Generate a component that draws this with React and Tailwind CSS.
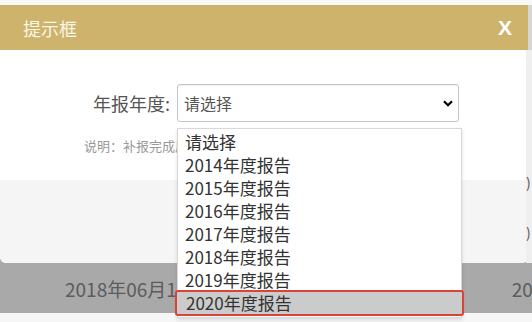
import React from "react";

const years = ["2014", "2015", "2016", "2017", "2018", "2019", "2020"];

// dropdown chevron drawn by hand
function Chevron() {
  return (
    <svg width="10" height="7" viewBox="0 0 10 7" className="text-black">
      <path d="M1 1.2 L5 5.2 L9 1.2" fill="none" stroke="currentColor" strokeWidth="2.2" />
    </svg>
  );
}

export default function App() {
  return (
    <div className="relative w-[532px] h-[322px] overflow-hidden bg-[#f6f6f6] font-['Noto_Sans_CJK_SC','Noto_Sans',sans-serif]">
      <div className="h-[5px] bg-[#f8f8f8]" />

      <div className="flex bg-[#a9a9a9]">
        {/* Modal */}
        <div className="w-[528px] flex flex-col bg-white rounded-b-[6px] overflow-hidden">
          <div className="h-[45px] bg-[#cdb36b] flex items-center justify-between pl-[23px] pr-[16px]">
            <span className="text-[18px] text-[#fbf6e6] leading-none">提示框</span>
            <span className="text-[21px] font-bold text-white leading-none font-['Liberation_Sans',sans-serif]">
              X
            </span>
          </div>

          <div className="h-[130px] bg-white pt-[34px]">
            <div className="flex items-center">
              <span className="w-[177px] pr-[7px] text-right text-[18px] text-[#555] leading-none">
                年报年度:
              </span>
              <div className="w-[282px] h-[38px] rounded-[3px] border border-[#c4c4c4] shadow-[inset_0_1px_1px_rgba(0,0,0,0.06)] flex items-center justify-between pl-[6px] pr-[5px]">
                <span className="text-[16px] text-[#555] leading-none">请选择</span>
                <Chevron />
              </div>
            </div>
            <div className="mt-[17px] pl-[84px] text-[13px] text-[#999] leading-none">
              说明：补报完成后请及时提交
            </div>
          </div>

          <div className="h-[83px] bg-[#f5f5f5]" />
        </div>

        {/* page behind the overlay, cut off on the right */}
        <div className="w-[4px] flex flex-col">
          <div className="h-[45px] bg-[#d6d6d6]" />
          <div className="h-[213px] bg-[#efefef] text-[14px] text-[#555] leading-none pt-[125px] -ml-[2px]">
            <div>)</div>
            <div className="mt-[36px]">)</div>
          </div>
          <div className="flex-1" />
        </div>
      </div>

      {/* table row under the overlay */}
      <div className="h-[50px] bg-[#a9a9a9] flex items-center justify-between text-[19px] text-[#5c5c5c] leading-none">
        <span className="pl-[65px] whitespace-nowrap">2018年06月15日</span>
        <span className="-mr-[22px] whitespace-nowrap">2020</span>
      </div>

      {/* open select list */}
      <div className="absolute left-[177px] top-[128px] w-[285px] h-[190px] bg-white border border-[#d8d8d8] shadow-[0_2px_4px_rgba(0,0,0,0.12)] pt-[1px] text-[17px] text-[#333] leading-[23px]">
        <div className="pl-[7px] h-[23px]">请选择</div>
        {years.map((y) =>
          y === "2020" ? (
            <div
              key={y}
              className="-mx-[3px] mt-[-1px] h-[26px] pl-[9px] bg-[#cbcbcb] border-2 border-[#d8443a] rounded-[3px] leading-[22px]"
            >
              {y}年度报告
            </div>
          ) : (
            <div key={y} className="pl-[7px] h-[23px]">
              {y}年度报告
            </div>
          )
        )}
      </div>
    </div>
  );
}
